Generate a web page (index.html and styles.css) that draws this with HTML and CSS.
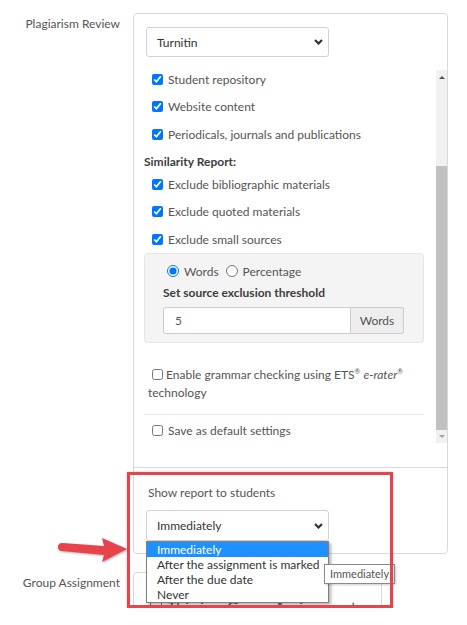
FILE: index.html
```html
<!DOCTYPE html>
<html>
<head>
<meta charset="utf-8">
<link rel="stylesheet" href="styles.css">
</head>
<body>
<div class="page">
  <div class="row">
    <div class="lbl">Plagiarism Review</div>
    <div class="panel">
      <div class="sec sec-tii">
        <div class="select"><span>Turnitin</span><svg class="chev" width="9" height="6" viewBox="0 0 9 6"><path d="M1 1 L4.5 4.5 L8 1" fill="none" stroke="#333" stroke-width="2.2"/></svg></div>
        <div class="scroller">
          <div class="scroll-content">
            <div class="group">
              <label class="cb-row"><input type="checkbox" checked><span>Student repository</span></label>
              <label class="cb-row"><input type="checkbox" checked><span>Website content</span></label>
              <label class="cb-row"><input type="checkbox" checked><span>Periodicals, journals and publications</span></label>
            </div>
            <div class="heading">Similarity Report:</div>
            <div class="group">
              <label class="cb-row"><input type="checkbox" checked><span>Exclude bibliographic materials</span></label>
              <label class="cb-row"><input type="checkbox" checked><span>Exclude quoted materials</span></label>
              <label class="cb-row"><input type="checkbox" checked><span>Exclude small sources</span></label>
            </div>
            <div class="graybox">
              <div class="radio-row">
                <label class="radio"><input type="radio" name="t" checked><span>Words</span></label>
                <label class="radio"><input type="radio" name="t"><span>Percentage</span></label>
              </div>
              <div class="sub-heading">Set source exclusion threshold</div>
              <div class="input-group">
                <div class="input">5</div>
                <div class="addon">Words</div>
              </div>
            </div>
            <p class="grammar"><input type="checkbox" class="inl"> Enable grammar checking using ETS<sup>®</sup> <i>e-rater</i><sup>®</sup><br>technology</p>
            <div class="sep"></div>
            <label class="cb-row save"><input type="checkbox"><span>Save as default settings</span></label>
          </div>
          <div class="scrollbar">
            <div class="sb-btn"><span class="tri-up"></span></div>
            <div class="sb-space"></div>
            <div class="sb-thumb"></div>
            <div class="sb-btn down"><span class="tri-down"></span></div>
          </div>
        </div>
      </div>
      <div class="sec sec-show">
        <div class="show-label">Show report to students</div>
        <div class="select-wrap">
          <div class="select"><span>Immediately</span><svg class="chev" width="9" height="6" viewBox="0 0 9 6"><path d="M1 1 L4.5 4.5 L8 1" fill="none" stroke="#333" stroke-width="2.2"/></svg></div>
          <ul class="listbox">
            <li class="sel">Immediately</li>
            <li>After the assignment is marked</li>
            <li>After the due date</li>
            <li>Never</li>
          </ul>
          <div class="tooltip">Immediately</div>
        </div>
      </div>
    </div>
  </div>
  <div class="row row2">
    <div class="lbl">Group Assignment</div>
    <div class="panel p3">
      <label class="cb-row group-cb"><input type="checkbox"><span>This is a Group Assignment</span></label>
    </div>
  </div>
  <div class="redbox"></div>
  <svg class="arrow" width="140" height="60" viewBox="0 0 140 60">
    <path d="M62 23 L104 26 L102 18 L127 29 L102 42 L104 35 L62 31 A4 4 0 0 1 62 23 Z" fill="#e8434c"/>
  </svg>
</div>
</body>
</html>
```
FILE: styles.css
```css
body {
  margin: 0;
  background: #fff;
  font-family: Lato, "Noto Sans", sans-serif;
  color: #555;
}
.page {
  position: relative;
  height: 608px;
  overflow: hidden;
  padding-top: 13px;
  box-sizing: border-box;
}
.row {
  display: flex;
  gap: 13px;
  align-items: flex-start;
}
.row2 {
  margin-top: 18px;
}
.lbl {
  flex: none;
  width: 120px;
  text-align: right;
  font-size: 12px;
  line-height: 16px;
  padding-top: 3px;
  color: #555;
}
.panel {
  flex: none;
  width: 315px;
  box-sizing: border-box;
  border: 1px solid #d9d9d9;
  border-radius: 4px;
}
.sec-tii {
  padding: 13px 0 24px 0;
}
.select {
  margin-left: 12px;
  width: 183px;
  height: 30px;
  box-sizing: border-box;
  border: 1px solid #cfd4d8;
  border-radius: 3px;
  background: #fff;
  display: flex;
  align-items: center;
  justify-content: space-between;
  padding: 0 5px 0 10px;
  font-size: 12px;
  color: #333;
}
.chev {
  display: block;
}
.scroller {
  margin-top: 13px;
  height: 373px;
  display: flex;
}
.scroll-content {
  flex: 1;
  padding: 0 12px 0 10px;
  font-size: 12px;
}
.group {
  display: flex;
  flex-direction: column;
  gap: 9.5px;
}
.cb-row {
  display: flex;
  align-items: center;
  height: 18px;
  padding-left: 8px;
  gap: 5px;
  color: #555;
}
.cb-row input, .grammar input {
  width: 11px;
  height: 11px;
  margin: 0;
}
.heading {
  margin-top: 9.5px;
  margin-bottom: 4.5px;
  height: 18px;
  line-height: 18px;
  font-weight: bold;
  font-size: 12px;
  color: #3d3d3d;
}
.graybox {
  margin-top: 5px;
  background: #f4f4f4;
  border: 1px solid #e6e6e6;
  border-radius: 4px;
  padding: 9px 19px 8px 18px;
}
.radio-row {
  display: flex;
  align-items: center;
  height: 16px;
  padding-left: 4px;
  gap: 7px;
}
.radio {
  display: flex;
  align-items: center;
  gap: 5px;
}
.radio input {
  width: 12px;
  height: 12px;
  margin: 0;
}
.sub-heading {
  margin-top: 6px;
  height: 16px;
  line-height: 16px;
  font-weight: bold;
  color: #3d3d3d;
}
.input-group {
  margin-top: 6px;
  display: flex;
  height: 27px;
}
.input {
  flex: 1;
  background: #fff;
  border: 1px solid #ccc;
  border-radius: 3px 0 0 3px;
  padding-left: 11px;
  line-height: 25px;
  color: #555;
}
.addon {
  width: 53px;
  box-sizing: border-box;
  background: #eee;
  border: 1px solid #ccc;
  border-left: none;
  border-radius: 0 3px 3px 0;
  text-align: center;
  line-height: 25px;
  color: #555;
}
.grammar {
  margin: 23px 0 0 0;
  padding-left: 4px;
  line-height: 18px;
  color: #555;
}
.grammar .inl {
  margin-left: 4px;
  vertical-align: -1px;
}
.grammar sup {
  font-size: 7px;
  line-height: 0;
  vertical-align: 5px;
}
.sep {
  margin-top: 12px;
  border-top: 1px solid #e6e6e6;
}
.save {
  margin-top: 6px;
}
.scrollbar {
  flex: none;
  width: 11px;
  background: #f1f1f1;
  display: flex;
  flex-direction: column;
}
.sb-btn {
  height: 14px;
  display: flex;
  align-items: center;
  justify-content: center;
}
.sb-btn.down {
  height: 13px;
}
.sb-space {
  height: 82px;
}
.sb-thumb {
  flex: 1;
  background: #c1c1c1;
}
.tri-up {
  width: 0;
  height: 0;
  border-left: 3px solid transparent;
  border-right: 3px solid transparent;
  border-bottom: 3px solid #505050;
}
.tri-down {
  width: 0;
  height: 0;
  border-left: 3px solid transparent;
  border-right: 3px solid transparent;
  border-top: 3px solid #a3a3a3;
}
.sec-show {
  border-top: 1px solid #d9d9d9;
  padding: 17px 0 12px 0;
}
.show-label {
  padding-left: 14px;
  font-size: 12px;
  line-height: 16px;
  margin-bottom: 9px;
  color: #555;
}
.select-wrap {
  position: relative;
}
.sec-show .select {
  height: 31px;
}
.listbox {
  position: absolute;
  z-index: 5;
  left: 12px;
  top: 31px;
  width: 183px;
  box-sizing: border-box;
  margin: 0;
  padding: 0;
  list-style: none;
  background: #fff;
  border: 1px solid #808080;
  box-shadow: 2px 2px 3px rgba(0,0,0,0.3);
  font-size: 12px;
  line-height: 15px;
  color: #333;
}
.listbox li {
  padding: 0 10px;
  white-space: nowrap;
}
.listbox li.sel {
  background: #1e90ff;
  color: #fff;
}
.tooltip {
  position: absolute;
  z-index: 6;
  left: 190px;
  top: 54px;
  height: 20px;
  box-sizing: border-box;
  padding: 0 5px;
  line-height: 18px;
  font-size: 11px;
  color: #555;
  background: #fff;
  border: 1px solid #8a8a8a;
  box-shadow: 1px 1px 2px rgba(0,0,0,0.2);
  white-space: nowrap;
}
.p3 {
  width: 249px;
  height: 120px;
  padding: 24px 0 0 16px;
}
.group-cb {
  padding-left: 0;
}
.group-cb input {
  width: 12px;
  height: 12px;
}
.redbox {
  position: absolute;
  z-index: 10;
  left: 127px;
  top: 472px;
  width: 266px;
  height: 136px;
  box-sizing: border-box;
  border: 3px solid #e8444e;
  box-shadow: 0 0 2px rgba(0,0,0,0.25);
}
.arrow {
  position: absolute;
  z-index: 10;
  left: 0;
  top: 520px;
  filter: drop-shadow(1px 1px 1px rgba(0,0,0,0.3));
}
```
